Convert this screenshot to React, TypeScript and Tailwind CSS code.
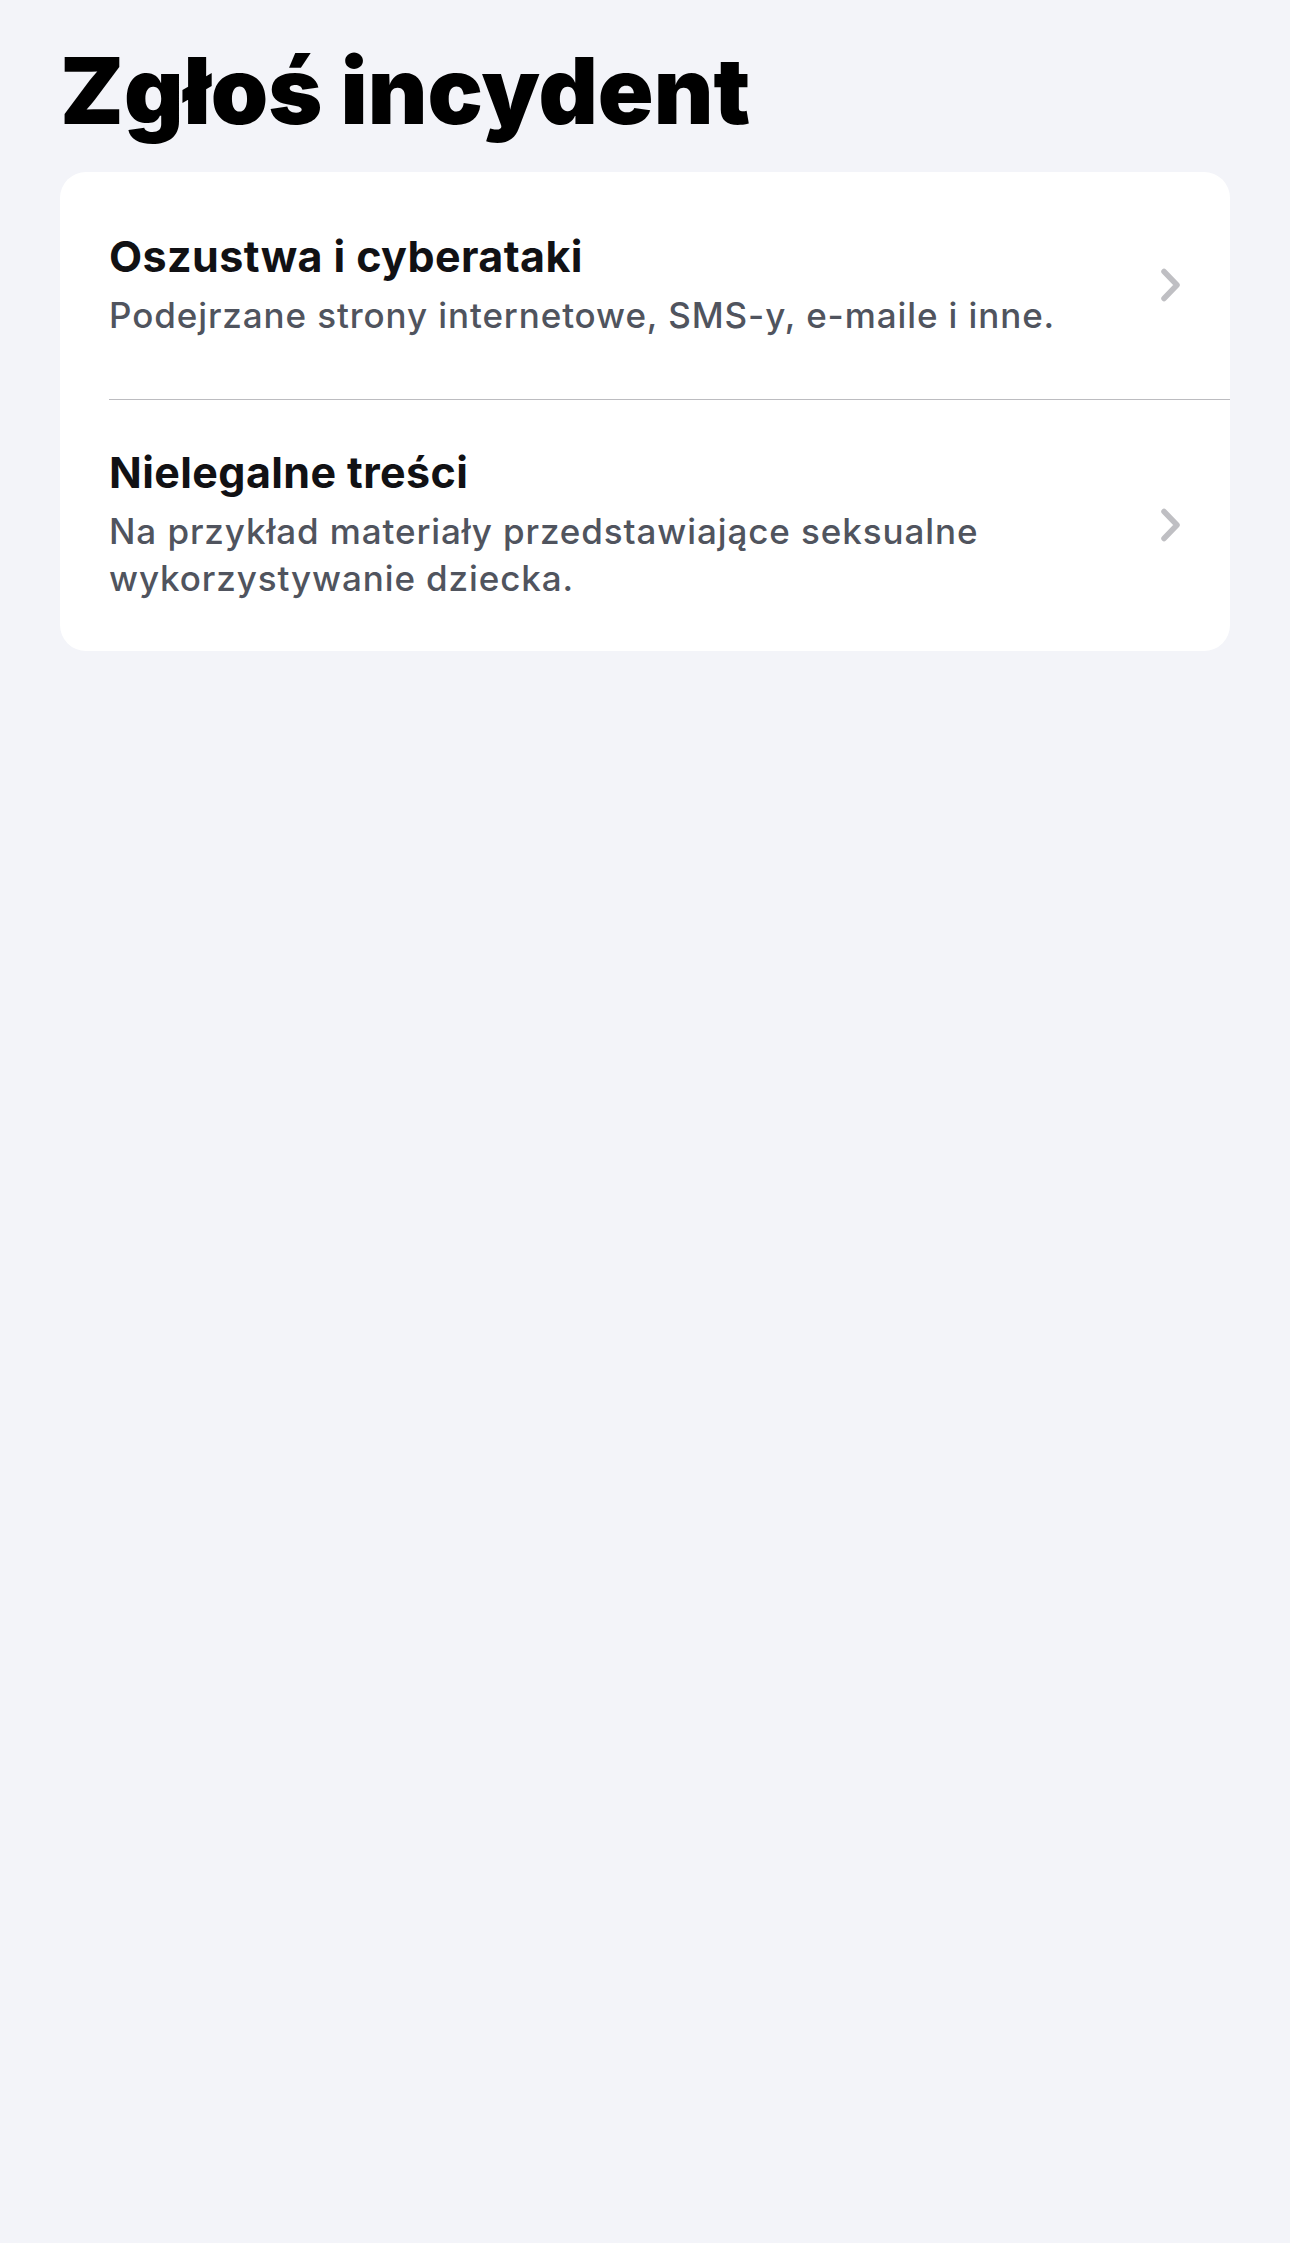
const items = [
  {
    title: 'Oszustwa i cyberataki',
    desc: 'Podejrzane strony internetowe, SMS-y, e-maile i inne.',
  },
  {
    title: 'Nielegalne treści',
    desc: 'Na przykład materiały przedstawiające seksualne wykorzystywanie dziecka.',
  },
];

function Chevron() {
  return (
    <svg width="22" height="34" viewBox="0 0 22 34" fill="none" className="shrink-0">
      <path
        d="M4 3.5 L17 17 L4 30.5"
        stroke="#bfbfc3"
        strokeWidth="5.5"
        strokeLinecap="round"
        strokeLinejoin="round"
      />
    </svg>
  );
}

export default function App() {
  return (
    <div
      className="min-h-[2243px] w-full bg-[#f3f4f9] px-[60px] pt-[37px]"
      style={{ fontFamily: 'Inter, "Noto Sans", sans-serif' }}
    >
      <h1 className="text-[92px] font-black leading-[108px] text-black">
        Zgłoś incydent
      </h1>

      <div className="mt-[27px] overflow-hidden rounded-[26px] bg-white">
        {items.map((item, idx) => (
          <div key={item.title}>
            {idx > 0 && <div className="ml-[49px] h-px bg-[#bcbcc0]" />}
            <div className="flex min-h-[227px] items-center gap-6 pt-[47px] pb-[49px] pl-[49px] pr-[48px]">
              <div className="flex-1 pr-[60px]">
                <div className="text-[43px] font-bold leading-[50px] tracking-[0.4px] text-[#111114]">
                  {item.title}
                </div>
                <div className="mt-[11px] text-[35px] font-medium leading-[47px] tracking-[0.9px] text-[#50545e]">
                  {item.desc}
                </div>
              </div>
              <Chevron />
            </div>
          </div>
        ))}
      </div>
    </div>
  );
}
